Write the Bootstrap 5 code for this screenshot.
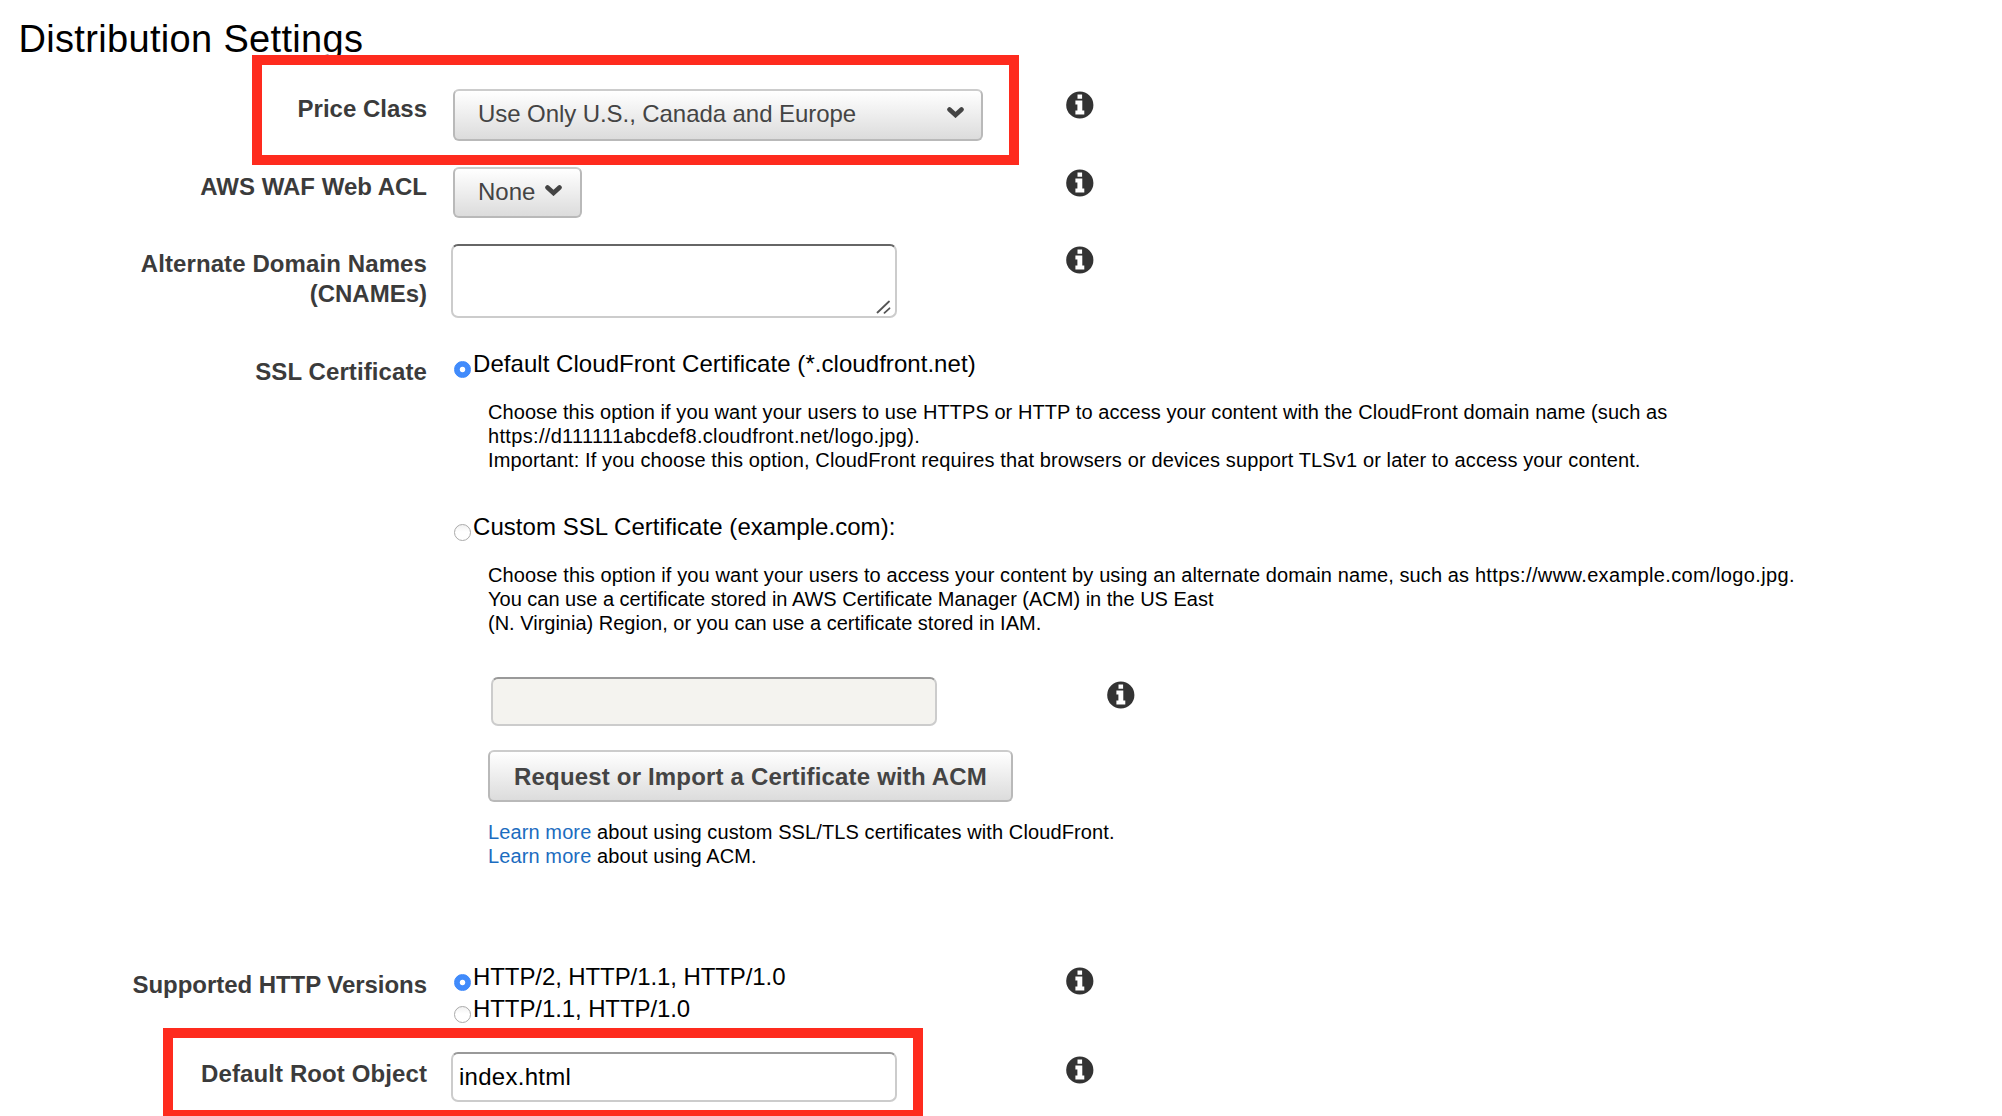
<!DOCTYPE html>
<html lang="en">
<head>
<meta charset="utf-8">
<meta name="viewport" content="width=device-width, initial-scale=1">
<title>Distribution Settings</title>
<link href="https://cdn.jsdelivr.net/npm/bootstrap@5.3.0/dist/css/bootstrap.min.css" rel="stylesheet">
<style>
body{font-family:"Liberation Sans",Arial,sans-serif;font-size:24px;line-height:32px;color:#000;background:#fff;height:1116px;overflow:hidden}
.settings-page{height:1116px}
.page-title{font-size:38px;line-height:50px;font-weight:400;letter-spacing:.33px;padding:14px 0 0 18.5px;height:89px;margin:0}
.setting-label{width:427px;margin-right:24px;padding-top:5px;line-height:30px;font-weight:700;color:#3b3b3b}
.setting-field{width:615px}
.row-price{height:78px}
.row-waf{height:77px}
.row-cname{height:104px}
.row-ssl{height:613px}
.row-http{height:91px}
.row-ssl .setting-label{padding-top:9px;letter-spacing:.1px}
.row-http .setting-label{padding-top:9px;letter-spacing:-.05px}
.row-root .setting-label{padding-top:7px;letter-spacing:.1px}
.info-mark{width:28px;height:28px;margin-top:2px;fill:#333}
.row-http .info-mark{margin-top:6px}
.row-root .info-mark{margin-top:4px}
.aws-btn,.aws-btn:hover{font-size:24px;line-height:30px;color:#444;background:linear-gradient(#fff,#dcdcdc);border:2px solid #b9b9b9;border-top-color:#ccc;border-radius:6px;padding:8px 23px 9.5px;height:52px}
.aws-btn.btn-price{width:530px;padding-right:17.5px;margin-left:2px;letter-spacing:-.07px}
.aws-btn.btn-waf{width:129px;height:51px;padding-right:18px;padding-bottom:8.5px;margin-left:2px}
.aws-btn.btn-cert{width:525px;font-weight:700;letter-spacing:.18px;padding:9px 0 8px 24px}
.chev{width:17px;height:11px;margin-top:-3px;fill:none;stroke:#444;stroke-width:4.6;stroke-linecap:round}
.aws-input.form-control{width:446px;height:50px;border:2px solid #ccc;border-top-color:#999;border-radius:7px;font-size:24px;line-height:30px;color:#000;padding:7px 6px;letter-spacing:.27px}
.aws-area.form-control{height:74px;border-top-color:#666;resize:none}
.grip{right:6px;bottom:4px;width:15px;height:14px;stroke:#555;stroke-width:1.8;stroke-linecap:round}
.aws-input.form-control:disabled{height:49px;background:#f4f3ef;opacity:1}
.form-check-input.aws-radio{width:17px;height:17px;margin:13px 2px 0 3px;border:1px solid #aaa;background:linear-gradient(#f1f1f1,#fff 45%);float:none}
.form-check-input.aws-radio:checked{border-color:#3b87fb;background:radial-gradient(circle,#fff 0 2.3px,#418bfb 3.2px)}
.help-text{font-size:20px;line-height:24px;margin:20px 0 0 37px}
.help-text span{display:block;white-space:nowrap}
.help-text span.ls-url{display:inline;letter-spacing:.37px}
.custom-line{margin-top:39px}
.custom-line .aws-radio{margin-top:13px}
.cert-row{margin:42px 0 0 40px}
.cert-row .aws-input{margin-right:170px}
.cert-row .info-mark{margin-top:4px}
.cert-actions{margin:24px 0 0 37px}
.help-text.learn-links{margin-top:18px}
.help-text a{color:#1b6cc0}
.ls-a{letter-spacing:.072px}
.ls-b{letter-spacing:.33px}
.ls-c{letter-spacing:.13px}
.ls-d{letter-spacing:.11px}
.ls-e{letter-spacing:.05px}
.ls-n{letter-spacing:-.09px}
.ls-w{letter-spacing:.1px}
.callout-box{border:10px solid #fe2b1e;pointer-events:none}
.callout-price{left:252px;top:54.5px;width:767px;height:110.5px}
.callout-root{left:163px;top:1028px;width:760px;height:92px}
</style>
<script src="https://cdn.jsdelivr.net/npm/bootstrap@5.3.0/dist/js/bootstrap.bundle.min.js"></script>
</head>
<body>
<svg class="d-none" xmlns="http://www.w3.org/2000/svg">
  <symbol id="info" viewBox="0 0 28 28"><path fill-rule="evenodd" d="M13.8 .4a13.6 13.6 0 1 0 0 27.2a13.6 13.6 0 1 0 0-27.2zM11.5 3.5h4.6v4.2h-4.6zM9.4 9.6h6.9v10h2v3.9H9.4v-3.9h2v-6.1h-2z"/></symbol>
  <symbol id="chevron" viewBox="0 0 17 11"><path d="M2.5 2.5L8.5 8L14.5 2.5"/></symbol>
</svg>
<main class="settings-page position-relative overflow-hidden">
  <h1 class="page-title">Distribution Settings</h1>

  <div class="d-flex align-items-start row-price">
    <div class="setting-label text-end">Price Class</div>
    <div class="setting-field"><button type="button" class="btn aws-btn btn-price d-flex justify-content-between align-items-center"><span>Use Only U.S., Canada and Europe</span><svg class="chev"><use href="#chevron"/></svg></button></div>
    <svg class="info-mark"><use href="#info"/></svg>
  </div>

  <div class="d-flex align-items-start row-waf">
    <div class="setting-label text-end">AWS WAF Web ACL</div>
    <div class="setting-field"><button type="button" class="btn aws-btn btn-waf d-flex justify-content-between align-items-center"><span>None</span><svg class="chev"><use href="#chevron"/></svg></button></div>
    <svg class="info-mark"><use href="#info"/></svg>
  </div>

  <div class="d-flex align-items-start row-cname">
    <div class="setting-label text-end"><span class="ls-w">Alternate Domain Names</span><br>(CNAMEs)</div>
    <div class="setting-field"><div class="position-relative d-inline-flex">
      <textarea class="form-control aws-input aws-area" aria-label="Alternate Domain Names"></textarea>
      <svg class="grip position-absolute" viewBox="0 0 15 14"><path d="M1.5 12.5L13 1.5M8.5 12.8L13.5 8.3"/></svg>
    </div></div>
    <svg class="info-mark"><use href="#info"/></svg>
  </div>

  <div class="d-flex align-items-start row-ssl">
    <div class="setting-label text-end">SSL Certificate</div>
    <div>
      <label class="d-flex align-items-start"><input class="form-check-input aws-radio" type="radio" name="ssl" checked><span class="ls-e">Default CloudFront Certificate (*.cloudfront.net)</span></label>
      <div class="help-text">
        <span class="ls-a">Choose this option if you want your users to use HTTPS or HTTP to access your content with the CloudFront domain name (such as</span>
        <span class="ls-b">https://d111111abcdef8.cloudfront.net/logo.jpg).</span>
        <span class="ls-c">Important: If you choose this option, CloudFront requires that browsers or devices support TLSv1 or later to access your content.</span>
      </div>
      <label class="d-flex align-items-start custom-line"><input class="form-check-input aws-radio" type="radio" name="ssl"><span class="ls-e">Custom SSL Certificate (example.com):</span></label>
      <div class="help-text">
        <span class="ls-d">Choose this option if you want your users to access your content by using an alternate domain name, such as <span class="ls-url">https://www.example.com/logo.jpg.</span></span>
        <span>You can use a certificate stored in AWS Certificate Manager (ACM) in the US East</span>
        <span>(N. Virginia) Region, or you can use a certificate stored in IAM.</span>
      </div>
      <div class="d-flex align-items-start cert-row">
        <input class="form-control aws-input" type="text" aria-label="Custom certificate" disabled>
        <svg class="info-mark"><use href="#info"/></svg>
      </div>
      <div class="d-flex cert-actions"><button type="button" class="btn aws-btn btn-cert text-nowrap text-start">Request or Import a Certificate with ACM</button></div>
      <div class="help-text learn-links ls-d">
        <span><a href="#" class="text-decoration-none">Learn more</a> about using custom SSL/TLS certificates with CloudFront.</span>
        <span><a href="#" class="text-decoration-none">Learn more</a> about using ACM.</span>
      </div>
    </div>
  </div>

  <div class="d-flex align-items-start row-http">
    <div class="setting-label text-end">Supported HTTP Versions</div>
    <div class="setting-field ls-n">
      <label class="d-flex align-items-start"><input class="form-check-input aws-radio" type="radio" name="http" checked><span>HTTP/2, HTTP/1.1, HTTP/1.0</span></label>
      <label class="d-flex align-items-start"><input class="form-check-input aws-radio" type="radio" name="http"><span>HTTP/1.1, HTTP/1.0</span></label>
    </div>
    <svg class="info-mark"><use href="#info"/></svg>
  </div>

  <div class="d-flex align-items-start row-root">
    <div class="setting-label text-end">Default Root Object</div>
    <div class="setting-field"><input class="form-control aws-input" type="text" value="index.html" aria-label="Default Root Object"></div>
    <svg class="info-mark"><use href="#info"/></svg>
  </div>

  <div class="callout-box callout-price position-absolute"></div>
  <div class="callout-box callout-root position-absolute"></div>
</main>
</body>
</html>
